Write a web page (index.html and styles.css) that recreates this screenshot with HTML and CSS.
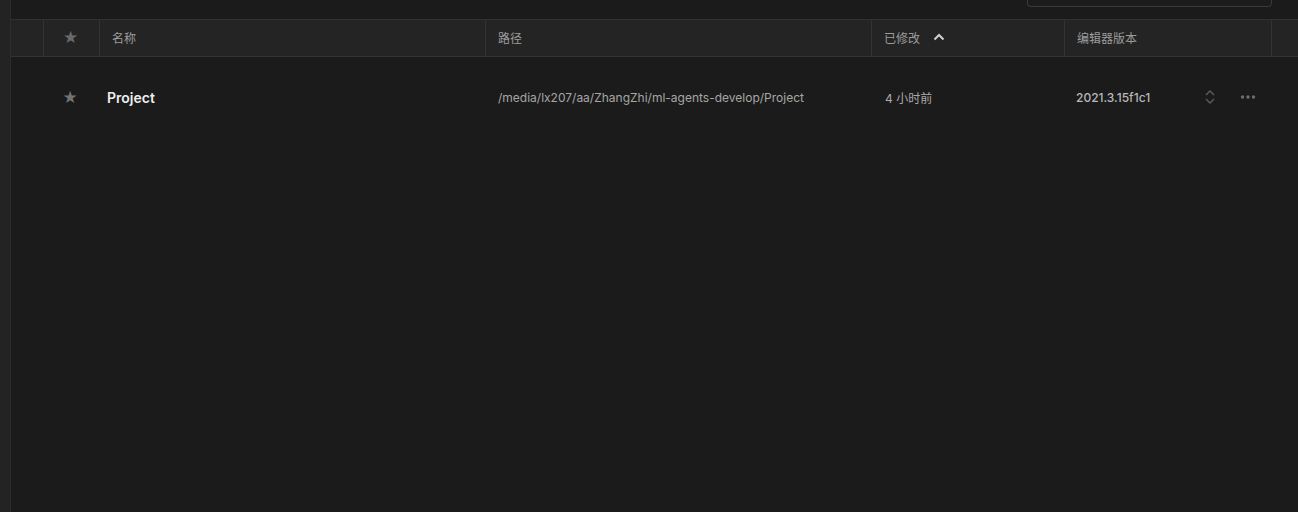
FILE: index.html
```html
<!DOCTYPE html>
<html>
 <head>
  <meta charset="utf-8">
  <title>Projects</title>
  <link rel="stylesheet" href="styles.css">
 </head>
 <body>
  <div class="sidebar"></div>
  <div class="main">
   <div class="topbar">
    <div class="search"></div>
   </div>

   <div class="grid head">
    <div class="cell"></div>
    <div class="cell star-col"><span class="star">&#9733;</span></div>
    <div class="cell">名称</div>
    <div class="cell">路径</div>
    <div class="cell">已修改
     <svg class="sort" width="12" height="8" viewBox="0 0 12 8"><path d="M1.5 6.5 L6 2 L10.5 6.5" fill="none" stroke="#d0d0d0" stroke-width="2"/></svg>
    </div>
    <div class="cell">编辑器版本</div>
    <div class="cell"></div>
   </div>

   <div class="grid row">
    <div class="rcell"></div>
    <div class="rcell star-col"><span class="star">&#9733;</span></div>
    <div class="rcell name">Project</div>
    <div class="rcell path">/media/lx207/aa/ZhangZhi/ml-agents-develop/Project</div>
    <div class="rcell time">4 小时前</div>
    <div class="rcell version">
     <span>2021.3.15f1c1</span>
     <svg class="updown" width="12" height="18" viewBox="0 0 12 18"><path d="M2 7 L6 3 L10 7 M2 11 L6 15 L10 11" fill="none" stroke="#5e5e5e" stroke-width="1.3"/></svg>
    </div>
    <div class="rcell more">
     <svg width="16" height="6" viewBox="0 0 16 6"><circle cx="2.5" cy="3" r="1.7" fill="#6e6e6e"/><circle cx="8" cy="3" r="1.7" fill="#6e6e6e"/><circle cx="13.5" cy="3" r="1.7" fill="#6e6e6e"/></svg>
    </div>
   </div>
  </div>
 </body>
</html>
```

FILE: styles.css
```css
html, body {
    margin: 0;
    height: 100%;
}
body {
    display: flex;
    background: #1b1b1b;
    font-family: Inter, "Noto Sans CJK SC", sans-serif;
    overflow: hidden;
}
.sidebar {
    width: 10px;
    background: #232323;
    border-right: 1px solid #2c2c2c;
    flex-shrink: 0;
}
.main {
    flex: 1;
    display: flex;
    flex-direction: column;
}
.topbar {
    height: 19px;
    display: flex;
    justify-content: flex-end;
    padding-right: 26px;
}
.search {
    width: 243px;
    height: 6px;
    border: 1px solid #3a3a3a;
    border-top: none;
    border-radius: 0 0 4px 4px;
    background: #1c1c1c;
}
.grid {
    display: grid;
    grid-template-columns: 32px 56px 386px 386px 193px 207px 1fr;
}
.head {
    height: 36px;
    background: #242424;
    border-top: 1px solid #303030;
    border-bottom: 1px solid #333;
}
.head .cell {
    display: flex;
    align-items: center;
    padding-left: 12px;
    padding-bottom: 2px;
    border-left: 1px solid #333;
    font-size: 12px;
    color: #9c9c9c;
}
.head .cell:first-child {
    border-left: none;
}
.star-col {
    justify-content: center;
    padding-left: 0 !important;
    padding-right: 2px;
}
.star {
    font-family: "DejaVu Sans", sans-serif;
    font-size: 17px;
    color: #6a6a6a;
}
.sort {
    margin-left: 13px;
}
.row {
    height: 80px;
}
.rcell {
    display: flex;
    align-items: center;
    padding-left: 13px;
    font-size: 12px;
    color: #a6a6a6;
}
.row .star {
    color: #727272;
}
.name {
    padding-left: 8px;
    font-size: 14px;
    font-weight: 600;
    color: #eeeeee;
}
.time {
    padding-left: 14px;
    color: #aaaaaa;
}
.version {
    padding-left: 12px;
    font-weight: 500;
    color: #b8b8b8;
}
.version span {
    flex: 1;
}
.updown {
    margin-right: 55px;
}
.more {
    padding-left: 0;
    margin-left: -31px;
}
```
